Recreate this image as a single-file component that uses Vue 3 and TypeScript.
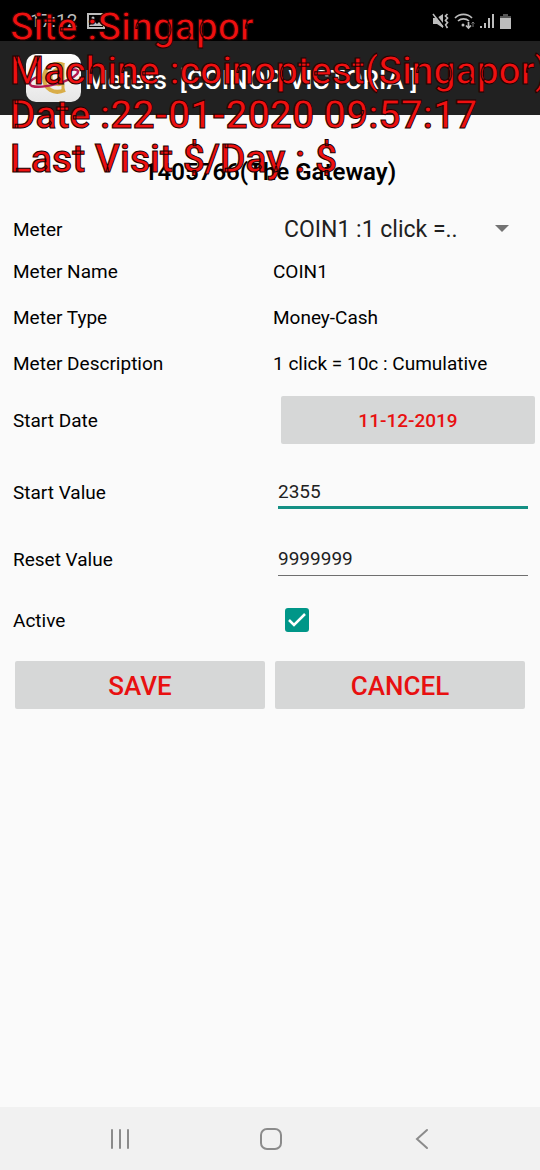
<script setup lang="ts">
import { ref } from 'vue'

const overlayLines = [
  'Site :Singapor',
  'Machine :coinoptest(Singapor)',
  'Date :22-01-2020 09:57:17',
  'Last Visit $/Day : $',
]
const details = [
  { label: 'Meter Name', value: 'COIN1' },
  { label: 'Meter Type', value: 'Money-Cash' },
  { label: 'Meter Description', value: '1 click = 10c : Cumulative' },
]
const meter = ref('COIN1 :1 click =..')
const startDate = ref('11-12-2019')
const startValue = ref('2355')
const resetValue = ref('9999999')
const active = ref(true)
</script>

<template>
  <div class="screen">
    <div class="status-bar">
      <span class="clock">17:12</span>
      <svg class="photo-icon" viewBox="0 0 18 16" aria-hidden="true">
        <path d="M1 1h16v14H1z" fill="none" stroke="#bdbdbd" stroke-width="2" />
        <path d="M2 13l5-5 3 3 2-2 4 4z" fill="#bdbdbd" />
        <circle cx="6" cy="5" r="1.5" fill="#bdbdbd" />
      </svg>
      <svg class="status-icons" viewBox="0 0 80 18" aria-hidden="true">
        <g fill="#bdbdbd" stroke="none">
          <path d="M1 6h4l6-4v14l-6-4H1z" />
          <path d="M48 14h2v2h-2zM52 11h2v5h-2zM56 6h2v10h-2zM60 2h2v14h-2z" />
          <path d="M68 6h11v11H68z" />
          <circle cx="31" cy="13" r="1.5" />
        </g>
        <path d="M71 2h5v2h3v2H68V4h3z" fill="#555" />
        <g fill="none" stroke="#bdbdbd" stroke-width="1.7">
          <path d="M23 6a12 12 0 0 1 17 0M26 9a8 8 0 0 1 11 0" />
          <path d="M36.500 10v6M34 13.500l2.500 2.500 2.500-2.500" />
          <path d="M15.500 2l-2 2 2 2-2 2.500 2 2-2 2.500 2 3" />
        </g>
        <path d="M41 15v-5m-1.500 1.500L41 10l1.500 1.500" fill="none" stroke="#777" />
        <path d="M2 1l11 14" stroke="#000" stroke-width="2" />
        <path d="M1 2l10 13" stroke="#bdbdbd" stroke-width="1.500" />
      </svg>
    </div>

    <header class="app-bar">
      <svg class="logo" viewBox="0 0 55 48" aria-hidden="true">
        <defs>
          <linearGradient id="tile" x1="0" y1="0" x2="0" y2="1">
            <stop offset="0" stop-color="#fff" />
            <stop offset="1" stop-color="#e6e6e6" />
          </linearGradient>
        </defs>
        <rect width="55" height="48" rx="10" fill="url(#tile)" />
        <path d="M38 11c-10-4-20 2-20 13s10 17 21 12" fill="none" stroke="#d9ad48" stroke-width="4" />
        <path d="M37 9v28M37 17c-6-4-12 0-12 6s6 10 12 6" fill="none" stroke="#d9ad48" stroke-width="3" />
        <path d="M15 22C5 24 1 30 6 32c10 3 38-4 45-12 3-4-1-5-6-4" fill="none" stroke="#b51b50" stroke-width="2.500" />
      </svg>
      <h1>Meters&nbsp; [COINOP VICTORIA ]</h1>
    </header>

    <main>
      <h2>1405766(The Gateway)</h2>
      <form @submit.prevent>
        <div class="row row-meter">
          <label for="meter">Meter</label>
          <div class="select-wrap">
            <select id="meter" v-model="meter">
              <option>COIN1 :1 click =..</option>
            </select>
            <svg viewBox="0 0 14 8" aria-hidden="true"><path d="M0 0h14L7 7z" fill="#737373" /></svg>
          </div>
        </div>
        <div v-for="item in details" :key="item.label" class="row">
          <span>{{ item.label }}</span>
          <span>{{ item.value }}</span>
        </div>
        <div class="row row-date">
          <label for="start-date">Start Date</label>
          <button id="start-date" class="date-button" type="button">{{ startDate }}</button>
        </div>
        <div class="row row-start">
          <label for="start-value">Start Value</label>
          <input id="start-value" v-model="startValue" class="field focused" type="text" inputmode="numeric" />
        </div>
        <div class="row row-reset">
          <label for="reset-value">Reset Value</label>
          <input id="reset-value" v-model="resetValue" class="field" type="text" inputmode="numeric" />
        </div>
        <div class="row row-active">
          <label for="active">Active</label>
          <div class="check-wrap">
            <input id="active" v-model="active" type="checkbox" />
            <svg v-if="active" viewBox="0 0 24 24" aria-hidden="true">
              <path d="M4 12l5 5L20 6" fill="none" stroke="#fff" stroke-width="2.500" />
            </svg>
          </div>
        </div>
        <div class="actions">
          <button type="submit">SAVE</button>
          <button type="button">CANCEL</button>
        </div>
      </form>
    </main>

    <nav class="nav-bar">
      <button type="button" aria-label="Recent apps">
        <svg viewBox="0 0 24 24"><path d="M4 3v18M12 3v18M20 3v18" /></svg>
      </button>
      <button type="button" aria-label="Home">
        <svg viewBox="0 0 24 24"><rect x="2" y="2" width="20" height="20" rx="6" /></svg>
      </button>
      <button type="button" aria-label="Back">
        <svg viewBox="0 0 24 24"><path d="M17 3l-10 9 10 9" /></svg>
      </button>
    </nav>

    <div class="overlay">
      <p v-for="line in overlayLines" :key="line">{{ line }}</p>
    </div>
  </div>
</template>

<style>
body {
  margin: 0;
  background: #fafafa;
}
</style>

<style scoped>
.screen {
  position: relative;
  display: flex;
  flex-direction: column;
  min-height: 100vh;
  overflow: hidden;
  background: #fafafa;
  color: #000;
  font-family: Roboto, "Liberation Sans", sans-serif;
  font-size: 19px;
  line-height: 24px;
}
.status-bar {
  display: flex;
  align-items: center;
  height: 41px;
  padding: 0 28px 0 30px;
  background: #000;
}
.clock {
  color: #bdbdbd;
  font-size: 19px;
}
.photo-icon {
  width: 18px;
  height: 16px;
  margin-left: 10px;
}
.status-icons {
  width: 80px;
  height: 18px;
  margin-left: auto;
}
.app-bar {
  display: flex;
  align-items: center;
  gap: 4px;
  height: 74px;
  padding: 0 26px;
  background: #212121;
}
.logo {
  flex: none;
  width: 55px;
  height: 48px;
}
h1 {
  margin: 0;
  padding-top: 4px;
  color: #fff;
  font-size: 26px;
  font-weight: 500;
  white-space: nowrap;
}
main {
  flex: 1;
}
h2 {
  margin: 0;
  padding: 45px 0 25px;
  font-size: 24px;
  font-weight: 600;
  line-height: 25px;
  text-align: center;
}
.row {
  display: grid;
  grid-template-columns: 260fr 267fr;
  align-items: center;
  min-height: 46px;
  padding-left: 13px;
}
.row > label,
.row > span {
  padding-top: 2px;
}
.row-meter {
  min-height: 38px;
}
.row-date {
  min-height: 68px;
}
.row-start {
  min-height: 76px;
}
.row-reset {
  min-height: 58px;
}
.row-active {
  min-height: 64px;
}
.select-wrap {
  display: grid;
  align-items: center;
  margin: 0 31px 0 11px;
}
.select-wrap > * {
  grid-area: 1 / 1;
}
.select-wrap svg {
  justify-self: end;
  width: 14px;
  height: 8px;
  pointer-events: none;
}
select {
  appearance: none;
  width: 100%;
  padding: 2px 0 0;
  border: 0;
  background: transparent;
  color: #212121;
  font: inherit;
  font-size: 23px;
  line-height: 30px;
}
button {
  border: 0;
  font-family: inherit;
}
.date-button,
.actions button {
  height: 48px;
  border-radius: 2px;
  background: #d6d7d7;
  color: #e81010;
  font-size: 19px;
  font-weight: 500;
}
.date-button {
  margin: 0 5px 0 8px;
}
.field {
  box-sizing: border-box;
  min-width: 0;
  height: 34px;
  margin: 0 12px 0 5px;
  padding: 0;
  border: 0;
  border-bottom: 1px solid #6f6f6f;
  outline: 0;
  background: transparent;
  color: #212121;
  font: inherit;
}
.field.focused {
  padding: 2px 0 0;
  border-bottom: 3px solid #149084;
}
.check-wrap {
  display: grid;
  width: 24px;
  margin-left: 12px;
}
.check-wrap > * {
  grid-area: 1 / 1;
  width: 24px;
  height: 24px;
}
.check-wrap svg {
  pointer-events: none;
}
.check-wrap input {
  appearance: none;
  box-sizing: border-box;
  margin: 0;
  border: 2px solid #009688;
  border-radius: 3px;
}
.check-wrap input:checked {
  background: #009688;
}
.actions {
  display: grid;
  grid-template-columns: 1fr 1fr;
  gap: 10px;
  padding: 9px 15px;
}
.actions button {
  padding-top: 3px;
  font-size: 26px;
}
.nav-bar {
  display: flex;
  align-items: center;
  justify-content: space-between;
  height: 63px;
  padding: 0 104px 0 106px;
  background: #f1f1f1;
}
.nav-bar button {
  display: flex;
  padding: 2px;
  background: transparent;
}
.nav-bar svg {
  width: 24px;
  height: 24px;
  fill: none;
  stroke: #8b8b8b;
  stroke-width: 2px;
  stroke-linecap: round;
}
.overlay {
  position: absolute;
  top: 5px;
  left: 10px;
  color: #ee1010;
  font-size: 39px;
  font-weight: 500;
  line-height: 44px;
  white-space: nowrap;
  pointer-events: none;
  -webkit-text-stroke: 1px #200;
}
.overlay p {
  margin: 0;
}
</style>
